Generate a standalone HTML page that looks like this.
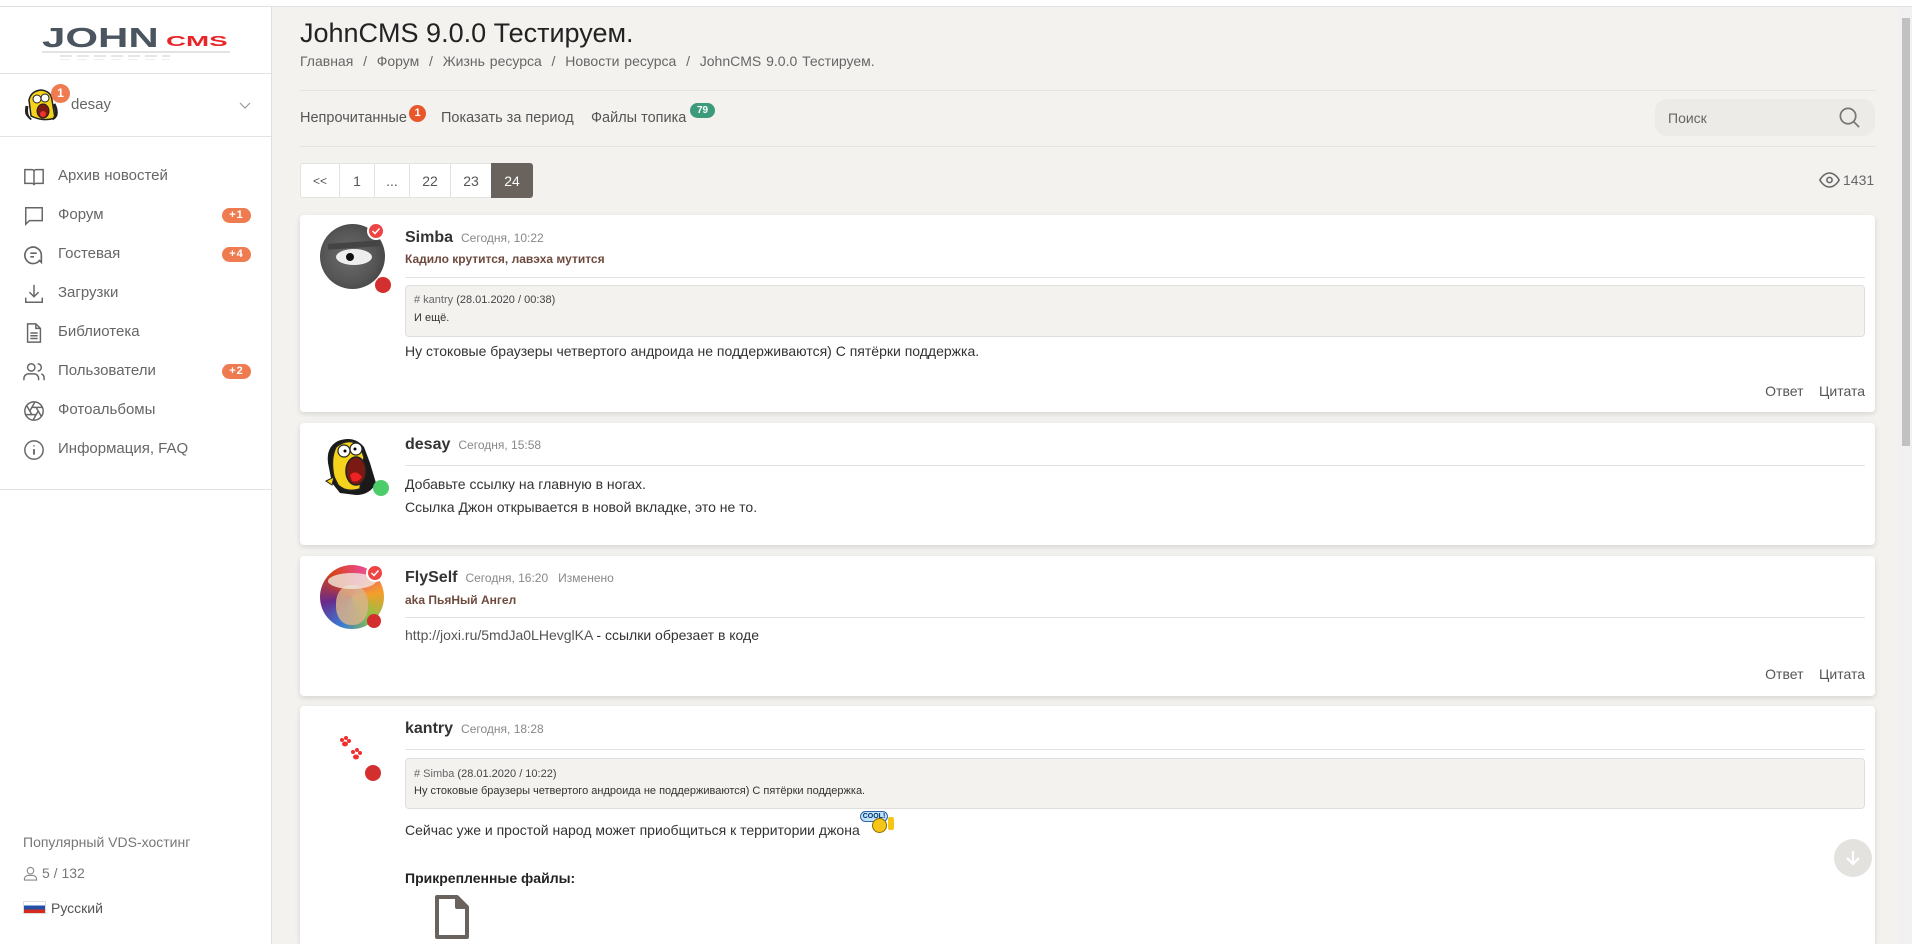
<!DOCTYPE html>
<html style="overflow:hidden;width:1912px;height:944px"><head><meta charset="utf-8">
<style>
*{box-sizing:border-box;margin:0;padding:0}
body{width:1912px;height:944px;overflow:hidden;background:#f3f2ef;font-family:"Liberation Sans",Arial,sans-serif;color:#333;position:relative}
.abs{position:absolute}
.topbar{left:0;top:0;width:1912px;height:7px;background:#fff;border-bottom:1px solid #e2e2e2}
.side{left:0;top:7px;width:272px;height:937px;background:#fff;border-right:1px solid #e0e0e0}
.hl{height:1px;background:#e2e3e6}
.nav{left:23px;font-size:15px;color:#666;}
.nav svg{position:absolute;left:0;top:-10px}
.nav span{position:absolute;left:35px;top:-9px;white-space:nowrap}
.badge{position:absolute;background:#ef7b51;color:#fff;font-size:11px;font-weight:bold;border-radius:8px;width:29px;height:15px;line-height:15px;text-align:center;letter-spacing:1px}
.card{position:absolute;left:300px;width:1575px;background:#fff;border-radius:4px;box-shadow:0 2px 6px rgba(0,0,0,.12);overflow:hidden}
.name{position:absolute;left:105px;font-size:16px;font-weight:bold;color:#333}
.date{font-size:12px;font-weight:normal;color:#888;margin-left:8px}
.status{position:absolute;left:105px;font-size:12px;font-weight:bold;color:#6e4a3e}
.sep{position:absolute;left:105px;right:10px;height:1px;background:#e2e3e6}
.quote{position:absolute;left:105px;right:10px;background:#f3f2ef;border:1px solid #dedede;border-radius:4px;font-size:11px;color:#333;padding:0 8px}
.body{position:absolute;left:105px;font-size:14px;color:#333;white-space:nowrap}
.acts{position:absolute;right:10px;font-size:14px;color:#555}
.dot{position:absolute;width:14px;height:14px;border-radius:50%;border:2px solid #fff}
.pg{position:absolute;top:163px;height:35px;line-height:35px;text-align:center;font-size:14px;color:#555;background:#fff;border:1px solid #e3e3e3}
</style></head><body>
<div class="abs topbar"></div>
<div class="abs side"></div>
<!-- logo -->
<div class="abs" style="left:42px;top:24px;font-weight:bold;font-size:28px;color:#4a5560;letter-spacing:0px;transform:scaleX(1.5);transform-origin:left top;line-height:28px">JOHN</div>
<div class="abs" style="left:166px;top:34px;font-weight:bold;font-size:15px;color:#e8262a;transform:scaleX(1.85);transform-origin:left top;line-height:16px">CMS</div>
<div class="abs" style="left:42px;top:51px;width:188px;height:2px;background:#e3e3e3"></div>
<div class="abs" style="left:60px;top:55px;width:110px;height:2px;background:repeating-linear-gradient(90deg,#e6e6e6 0 12px,transparent 12px 17px)"></div>
<div class="abs" style="left:60px;top:59px;width:110px;height:1px;background:repeating-linear-gradient(90deg,#eee 0 10px,transparent 10px 17px)"></div>
<div class="abs hl" style="left:0;top:73px;width:271px"></div>
<!-- user -->
<div class="abs" style="left:23px;top:86px;width:38px;height:38px;border-radius:50%;background:#fff;overflow:hidden">
<svg width="38" height="38" viewBox="0 0 38 38"><path d="M8 30 L6 14 Q8 5 18 4 Q28 5 29 14 L32 32 Q20 36 8 30Z" fill="#f5d21c" stroke="#222" stroke-width="1.5"/><circle cx="14" cy="13" r="4" fill="#fff" stroke="#222"/><circle cx="22" cy="12" r="4" fill="#fff" stroke="#222"/><ellipse cx="20" cy="25" rx="6" ry="7" fill="#7a1a12" stroke="#222"/><ellipse cx="20" cy="28" rx="3" ry="3" fill="#e33"/><path d="M4 20 Q2 30 8 34" stroke="#222" stroke-width="3" fill="none"/><path d="M31 18 Q36 28 30 34" stroke="#222" stroke-width="3" fill="none"/></svg></div>
<div class="abs" style="left:51px;top:84px;width:19px;height:19px;border-radius:50%;background:#ef7b51;color:#fff;font-size:12px;font-weight:bold;text-align:center;line-height:19px">1</div>
<div class="abs" style="left:71px;top:96px;font-size:15px;color:#666">desay</div>
<svg class="abs" style="left:239px;top:102px" width="12" height="8"><path d="M1 1 L6 6 L11 1" stroke="#999" fill="none" stroke-width="1.2"/></svg>
<div class="abs hl" style="left:0;top:136px;width:271px"></div>
<!-- nav -->
<div class="abs nav" style="top:176px"><svg width="22" height="22" viewBox="0 0 24 24" fill="none" stroke="#666" stroke-width="1.6"><path d="M2 4h8a2 2 0 0 1 2 2v15a2 2 0 0 0-2-2H2zM22 4h-8a2 2 0 0 0-2 2v15a2 2 0 0 1 2-2h8z"/></svg><span>Архив новостей</span></div>
<div class="abs nav" style="top:215px"><svg width="22" height="22" viewBox="0 0 24 24" fill="none" stroke="#666" stroke-width="1.6"><path d="M3 3h18v14H7l-4 4z"/></svg><span>Форум</span></div>
<div class="badge" style="left:222px;top:208px">+1</div>
<div class="abs nav" style="top:254px"><svg width="22" height="22" viewBox="0 0 24 24" fill="none" stroke="#666" stroke-width="1.8"><path d="M20 20l-2-2A9 9 0 1 1 20 12v8z"/><path d="M8 10h7M8 14h4"/></svg><span>Гостевая</span></div>
<div class="badge" style="left:222px;top:247px">+4</div>
<div class="abs nav" style="top:293px"><svg width="22" height="22" viewBox="0 0 24 24" fill="none" stroke="#666" stroke-width="1.6"><path d="M12 2v13M7 10l5 5 5-5M3 16v5h18v-5"/></svg><span>Загрузки</span></div>
<div class="abs nav" style="top:332px"><svg width="22" height="22" viewBox="0 0 24 24" fill="none" stroke="#666" stroke-width="1.6"><path d="M5 2h9l5 5v15H5zM14 2v5h5M8 12h8M8 15h8M8 18h8"/></svg><span>Библиотека</span></div>
<div class="abs nav" style="top:371px"><svg width="22" height="22" viewBox="0 0 24 24" fill="none" stroke="#666" stroke-width="1.6"><circle cx="9" cy="7" r="4"/><path d="M1 21v-2a5 5 0 0 1 5-5h6a5 5 0 0 1 5 5v2M16 3a4 4 0 0 1 0 8M20 14a5 5 0 0 1 3 5v2"/></svg><span>Пользователи</span></div>
<div class="badge" style="left:222px;top:364px">+2</div>
<div class="abs nav" style="top:410px"><svg width="22" height="22" viewBox="0 0 24 24" fill="none" stroke="#666" stroke-width="1.6"><circle cx="12" cy="12" r="10"/><path d="M14.3 8l5.7 9.9M9.7 8h11.5M7.4 12l5.7-9.9M9.7 16L4 6.1M14.3 16H2.8M16.6 12l-5.7 9.9"/></svg><span>Фотоальбомы</span></div>
<div class="abs nav" style="top:449px"><svg width="22" height="22" viewBox="0 0 24 24" fill="none" stroke="#666" stroke-width="1.6"><circle cx="12" cy="12" r="10"/><path d="M12 11v6M12 7v1" stroke-width="2"/></svg><span>Информация, FAQ</span></div>
<div class="abs hl" style="left:0;top:489px;width:271px"></div>
<div class="abs" style="left:23px;top:834px;font-size:14px;color:#777">Популярный VDS-хостинг</div>
<svg class="abs" style="left:23px;top:866px" width="15" height="15" viewBox="0 0 16 16" fill="none" stroke="#888" stroke-width="1.2"><circle cx="8" cy="5" r="3.5"/><path d="M1.5 15v-1a4 4 0 0 1 4-4h5a4 4 0 0 1 4 4v1z"/></svg>
<div class="abs" style="left:42px;top:865px;font-size:14px;color:#777">5 / 132</div>
<div class="abs" style="left:23px;top:901px;width:23px;height:13px;background:linear-gradient(#fff 0 33%,#2451a8 33% 66%,#d52b1e 66%);border:1px solid #ddd"></div>
<div class="abs" style="left:51px;top:900px;font-size:14px;color:#555">Русский</div>

<!-- main header -->
<div class="abs" style="left:300px;top:18px;font-size:27px;color:#222">JohnCMS 9.0.0 Тестируем.</div>
<div class="abs" style="left:300px;top:53px;font-size:14px;color:#666;word-spacing:1px">Главная &nbsp;/&nbsp; Форум &nbsp;/&nbsp; Жизнь ресурса &nbsp;/&nbsp; Новости ресурса &nbsp;/&nbsp; JohnCMS 9.0.0 Тестируем.</div>
<div class="abs hl" style="left:300px;top:90px;width:1575px"></div>
<div class="abs" style="left:300px;top:110px;font-size:14.5px;color:#555">Непрочитанные</div>
<div class="abs" style="left:409px;top:105px;width:17px;height:17px;border-radius:50%;background:#e8572a;color:#fff;font-size:11px;font-weight:bold;text-align:center;line-height:17px">1</div>
<div class="abs" style="left:441px;top:110px;font-size:14.5px;color:#555">Показать за период</div>
<div class="abs" style="left:591px;top:110px;font-size:14.5px;color:#555">Файлы топика</div>
<div class="abs" style="left:690px;top:103px;width:25px;height:15px;border-radius:8px;background:#3d9a7a;color:#fff;font-size:10px;font-weight:bold;text-align:center;line-height:15px">79</div>
<div class="abs" style="left:1655px;top:99px;width:220px;height:37px;border-radius:12px;background:#ecebe7"></div>
<div class="abs" style="left:1668px;top:110px;font-size:14px;color:#666">Поиск</div>
<svg class="abs" style="left:1838px;top:106px" width="23" height="23" viewBox="0 0 24 24" fill="none" stroke="#777" stroke-width="1.8"><circle cx="10.5" cy="10.5" r="8"/><path d="M16.5 16.5L22 22"/></svg>
<div class="abs hl" style="left:300px;top:146px;width:1575px"></div>

<!-- pagination -->
<div class="pg" style="left:300px;width:40px;border-radius:3px 0 0 3px;font-size:12px">&lt;&lt;</div>
<div class="pg" style="left:339px;width:36px">1</div>
<div class="pg" style="left:374px;width:36px">...</div>
<div class="pg" style="left:409px;width:42px">22</div>
<div class="pg" style="left:450px;width:42px">23</div>
<div class="pg" style="left:491px;width:42px;background:#6a635d;border-color:#6a635d;color:#fff;border-radius:0 3px 3px 0">24</div>
<svg class="abs" style="left:1819px;top:171px" width="21" height="18" viewBox="0 0 24 20" fill="none" stroke="#666" stroke-width="1.8"><path d="M1 10s4-8 11-8 11 8 11 8-4 8-11 8S1 10 1 10z"/><circle cx="12" cy="10" r="3"/></svg>
<div class="abs" style="left:1843px;top:172px;font-size:14px;color:#666">1431</div>

<!-- card 1 -->
<div class="card" style="top:215px;height:197px;overflow:visible">
 <div class="abs" style="left:20px;top:9px;width:65px;height:65px;border-radius:50%;background:radial-gradient(circle at 45% 50%,#6e6c6e 0,#555 55%,#3a3436 100%);overflow:hidden"><div class="abs" style="left:16px;top:25px;width:36px;height:16px;border-radius:50%;background:#eee"></div><div class="abs" style="left:26px;top:29px;width:8px;height:8px;border-radius:50%;background:#111"></div><div class="abs" style="left:8px;top:18px;width:52px;height:6px;background:#444;transform:rotate(-4deg)"></div></div>
 <div class="dot" style="left:67px;top:7px;width:18px;height:18px;background:#ef4444"><svg width="14" height="14" viewBox="0 0 14 14" style="position:absolute;left:0;top:0"><path d="M3.5 7l2.5 2.5 4.5-5" stroke="#fff" stroke-width="1.5" fill="none"/></svg></div>
 <div class="dot" style="left:75px;top:62px;width:16px;height:16px;background:#d32f2f;border:0"></div>
 <div class="name" style="top:14px">Simba<span class="date">Сегодня, 10:22</span></div>
 <div class="status" style="top:37px">Кадило крутится, лавэха мутится</div>
 <div class="sep" style="top:62px"></div>
 <div class="quote" style="top:70px;height:52px"><div style="position:absolute;top:8px;left:8px;color:#444"><span style="color:#666"># kantry</span> (28.01.2020 / 00:38)</div><div style="position:absolute;top:26px;left:8px">И ещё.</div></div>
 <div class="body" style="top:128px">Ну стоковые браузеры четвертого андроида не поддерживаются) С пятёрки поддержка.</div>
 <div class="acts" style="top:168px">Ответ &nbsp;&nbsp;&nbsp;Цитата</div>
</div>

<!-- card 2 -->
<div class="card" style="top:423px;height:122px">
 <svg class="abs" style="left:20px;top:10px" width="64" height="64" viewBox="0 0 64 64"><path d="M12 50 L8 30 Q6 14 18 8 Q34 2 44 14 L50 30 L56 50 Q50 62 36 62 L20 60Z" fill="#1a1a1a"/><path d="M14 44 Q10 26 16 14 Q28 4 40 12 L44 24 L40 56 Q26 60 18 52Z" fill="#f5d21c" stroke="#222" stroke-width="1.5"/><circle cx="24" cy="18" r="6" fill="#fff" stroke="#222" stroke-width="1.2"/><circle cx="36" cy="16" r="6" fill="#fff" stroke="#222" stroke-width="1.2"/><circle cx="25" cy="18" r="1.5" fill="#000"/><circle cx="35" cy="16" r="1.5" fill="#000"/><ellipse cx="36" cy="38" rx="10" ry="14" fill="#7a1a12" stroke="#222" stroke-width="1.5"/><path d="M30 42 Q36 36 42 44 Q38 50 32 48Z" fill="#e22"/><path d="M6 48 L14 44 L12 52Z" fill="#f5d21c" stroke="#222"/></svg>
 <div class="dot" style="left:73px;top:57px;width:16px;height:16px;background:#4ccc6a;border:0"></div>
 <div class="name" style="top:13px">desay<span class="date">Сегодня, 15:58</span></div>
 <div class="sep" style="top:42px"></div>
 <div class="body" style="top:53px">Добавьте ссылку на главную в ногах.</div>
 <div class="body" style="top:76px">Ссылка Джон открывается в новой вкладке, это не то.</div>
</div>

<!-- card 3 -->
<div class="card" style="top:556px;height:140px">
 <div class="abs" style="left:20px;top:9px;width:64px;height:64px;border-radius:50%;background:conic-gradient(from 20deg,#e84a8a,#f59e2a,#8bc34a,#3a7bd5,#6a2a8a,#d84315,#e84a8a);overflow:hidden"><div class="abs" style="left:16px;top:20px;width:32px;height:40px;border-radius:45%;background:#d9b38a;opacity:.85"></div><div class="abs" style="left:8px;top:8px;width:48px;height:16px;border-radius:50%;background:#f0e8e0;opacity:.8"></div></div>
 <div class="dot" style="left:66px;top:8px;width:18px;height:18px;background:#ef4444"><svg width="14" height="14" viewBox="0 0 14 14" style="position:absolute;left:0;top:0"><path d="M3.5 7l2.5 2.5 4.5-5" stroke="#fff" stroke-width="1.5" fill="none"/></svg></div>
 <div class="dot" style="left:67px;top:58px;width:14px;height:14px;background:#d32f2f;border:0"></div>
 <div class="name" style="top:13px">FlySelf<span class="date">Сегодня, 16:20 &nbsp;&nbsp;Изменено</span></div>
 <div class="status" style="top:37px">aka ПьяНый Ангел</div>
 <div class="sep" style="top:61px"></div>
 <div class="body" style="top:71px"><span style="color:#555">http://joxi.ru/5mdJa0LHevglKA</span> - ссылки обрезает в коде</div>
 <div class="acts" style="top:110px">Ответ &nbsp;&nbsp;&nbsp;Цитата</div>
</div>

<!-- card 4 -->
<div class="card" style="top:706px;height:238px;border-radius:4px 4px 0 0">
 <svg class="abs" style="left:38px;top:28px" width="30" height="30" viewBox="0 0 30 30" fill="#f03030"><circle cx="4" cy="6" r="2"/><circle cx="8" cy="4" r="2"/><circle cx="11" cy="7" r="2"/><ellipse cx="7" cy="10" rx="3" ry="2.5"/><circle cx="15" cy="18" r="2"/><circle cx="19" cy="16" r="2"/><circle cx="22" cy="19" r="2"/><ellipse cx="18" cy="23" rx="3" ry="2.5"/></svg>
 <div class="dot" style="left:65px;top:59px;width:16px;height:16px;background:#d32f2f;border:0"></div>
 <div class="name" style="top:14px">kantry<span class="date">Сегодня, 18:28</span></div>
 <div class="sep" style="top:43px"></div>
 <div class="quote" style="top:52px;height:51px"><div style="position:absolute;top:9px;left:8px;color:#444"><span style="color:#666"># Simba</span> (28.01.2020 / 10:22)</div><div style="position:absolute;top:26px;left:8px;white-space:nowrap">Ну стоковые браузеры четвертого андроида не поддерживаются) С пятёрки поддержка.</div></div>
 <div class="body" style="top:115px">Сейчас уже и простой народ может приобщиться к территории джона<span style="position:relative;display:inline-block;width:34px;height:14px"><span style="position:absolute;left:0;top:-10px;font-size:7px;font-weight:bold;color:#036;background:#bfe3ff;border:1px solid #369;border-radius:6px;padding:0 2px;line-height:9px">COOL!</span><span style="position:absolute;left:12px;top:-3px;width:15px;height:15px;border-radius:50%;background:#f5c518;border:1px solid #8a6a00"></span><span style="position:absolute;left:28px;top:-4px;width:6px;height:13px;background:#f5c518;border-radius:2px"></span></span></div>
 <div class="abs" style="left:105px;top:164px;font-size:14px;font-weight:bold;color:#222">Прикрепленные файлы:</div>
 <svg class="abs" style="left:133px;top:187px" width="38" height="48" viewBox="0 0 38 48" fill="none" stroke="#6a635d" stroke-width="4" stroke-linejoin="round"><path d="M4 4h20l10 10v30H4z"/><path d="M24 4v10h10" fill="#6a635d"/></svg>
</div>

<!-- scroll down button -->
<div class="abs" style="left:1834px;top:839px;width:38px;height:38px;border-radius:50%;background:#e3e2df"></div>
<svg class="abs" style="left:1844px;top:849px" width="18" height="18" viewBox="0 0 18 18" fill="none" stroke="#fff" stroke-width="2.2"><path d="M9 2v13M3 9l6 6 6-6"/></svg>

<!-- scrollbar -->
<div class="abs" style="left:1898px;top:7px;width:14px;height:937px;background:#f1f1f1"></div>
<div class="abs" style="left:1902px;top:18px;width:8px;height:428px;background:#c1c1c1"></div>
</body></html>
